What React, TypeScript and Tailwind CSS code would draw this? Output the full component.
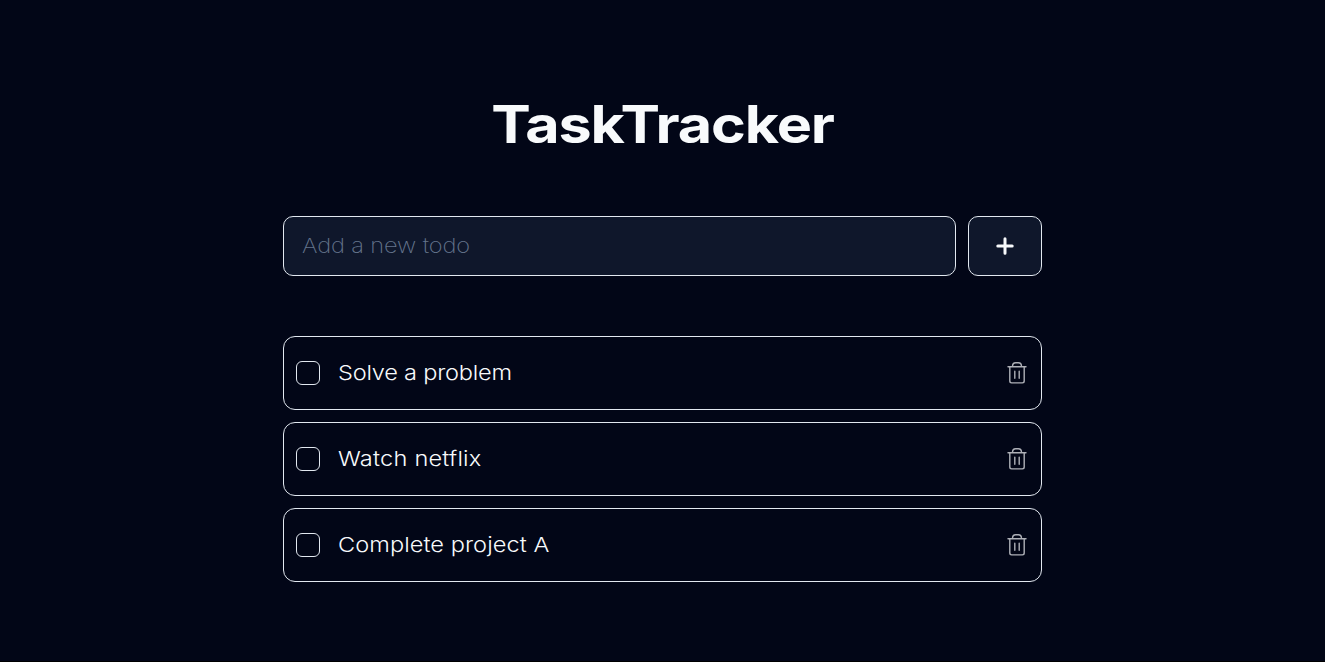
import { useState } from "react";

const initialTasks = [
  { title: "Solve a problem", textStyle: "tracking-[-0.19px]" },
  { title: "Watch netflix", textStyle: "tracking-[0.19px]" },
  { title: "Complete project A", textStyle: "tracking-[0.05px]" },
];

function PlusIcon() {
  return (
    <svg width="18" height="18" viewBox="0 0 18 18" fill="none" stroke="currentColor" strokeWidth="3" strokeLinecap="round">
      <path d="M9 1.8v14.4M1.8 9h14.4" />
    </svg>
  );
}

function TrashIcon() {
  return (
    <svg
      width="20"
      height="24"
      viewBox="0 0 20 24"
      fill="none"
      stroke="currentColor"
      strokeWidth="1.4"
      strokeLinecap="round"
      strokeLinejoin="round"
    >
      <path d="M1 5.7h18M2.8 5.7v14.4a1.8 1.8 0 0 0 1.8 1.8h10.8a1.8 1.8 0 0 0 1.8-1.8V5.7M5.5 5.4c0-2.4 1.2-3.7 3.2-3.7h2.6c2 0 3.2 1.3 3.2 3.7M7.8 10.3v7M12.2 10.3v7" />
    </svg>
  );
}

export default function App() {
  const [done, setDone] = useState<string[]>([]);
  const toggle = (title: string) =>
    setDone(done.includes(title) ? done.filter((t) => t !== title) : [...done, title]);

  return (
    <div className="h-[662px] border-b border-black bg-[#020617] font-['Inter',sans-serif] text-slate-50">
      <main className="mx-auto flex w-[759px] flex-col pt-[89px]">
        <h1 className="h-[71px] scale-x-[1.14] text-center text-[52px] leading-[71px] font-bold tracking-[-1px] whitespace-nowrap">
          TaskTracker
        </h1>
        <form className="mt-14 flex gap-3" onSubmit={(e) => e.preventDefault()}>
          <label className="flex h-[60px] w-[673px] items-center overflow-hidden rounded-[10px] border border-slate-200 bg-slate-900 px-[18px]">
            <input
              type="text"
              placeholder="Add a new todo"
              className="w-[550px] origin-left scale-x-[1.15] bg-transparent text-[20.5px] font-[240] tracking-[-0.1px] outline-none placeholder:text-[#64748b]"
            />
          </label>
          <button
            aria-label="Add task"
            className="flex h-[60px] w-[74px] items-center justify-center rounded-[10px] border border-slate-200 bg-slate-900"
          >
            <PlusIcon />
          </button>
        </form>
        <ul className="mt-[60px] flex flex-col gap-3">
          {initialTasks.map(({ title, textStyle }) => (
            <li
              key={title}
              className="flex h-[74px] items-center justify-between rounded-xl border border-slate-200 pr-[14px] pl-3"
            >
              <label className="flex items-center gap-[18px]">
                <input
                  type="checkbox"
                  checked={done.includes(title)}
                  onChange={() => toggle(title)}
                  className="size-6 shrink-0 appearance-none rounded-md border border-slate-200 checked:bg-slate-200"
                />
                <span
                  className={`origin-left scale-x-[1.15] text-[20.5px] leading-7 font-light ${textStyle}`}
                >
                  {title}
                </span>
              </label>
              <button aria-label="Delete task" className="text-slate-50/70">
                <TrashIcon />
              </button>
            </li>
          ))}
        </ul>
      </main>
    </div>
  );
}
